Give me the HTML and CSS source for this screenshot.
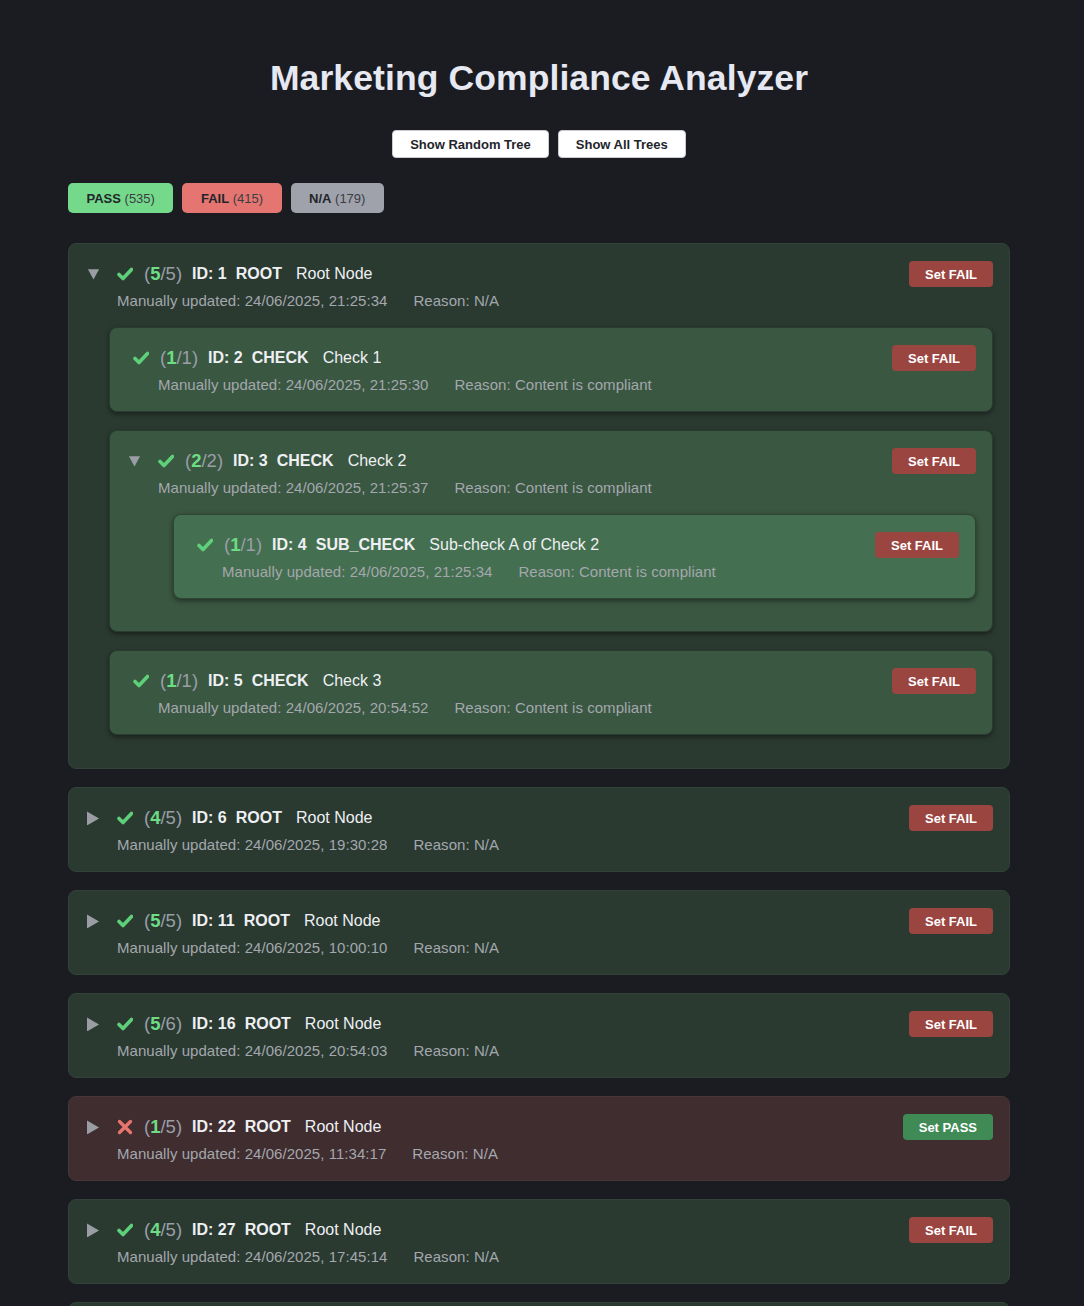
FILE: index.html
```html
<!DOCTYPE html>
<html lang="en">
<head>
<meta charset="utf-8">
<title>Marketing Compliance Analyzer</title>
<link rel="stylesheet" href="styles.css">
</head>
<body>
<div class="app">
  <h1 class="title">Marketing Compliance Analyzer</h1>
  <div class="actions">
    <button class="btn">Show Random Tree</button>
    <button class="btn">Show All Trees</button>
  </div>
  <div class="filters">
    <span class="chip chip-pass"><b>PASS</b> (535)</span>
    <span class="chip chip-fail"><b>FAIL</b> (415)</span>
    <span class="chip chip-na"><b>N/A</b> (179)</span>
  </div>

  <div class="trees">
    <!-- Tree 1 expanded -->
    <div class="node node-root pass">
      <div class="node-head">
        <span class="toggle"><svg viewBox="0 0 14 14" width="14" height="14"><polygon points="1,2 13,2 7,13" /></svg></span>
        <svg class="status-icon ok" viewBox="0 0 16 16" width="16" height="16"><path d="M2 8.5 L6 12.5 L14.5 3.5" /></svg>
        <span class="score">(<span class="num">5</span>/5)</span>
        <span class="node-id">ID: 1</span>
        <span class="node-type">ROOT</span>
        <span class="node-name">Root Node</span>
        <button class="set-btn set-fail">Set FAIL</button>
      </div>
      <div class="node-meta"><span>Manually updated: 24/06/2025, 21:25:34</span><span>Reason: N/A</span></div>
      <div class="children lvl1">
        <div class="node node-child">
          <div class="node-head">
            <span class="leaf-pad"></span>
            <svg class="status-icon ok" viewBox="0 0 16 16" width="16" height="16"><path d="M2 8.5 L6 12.5 L14.5 3.5" /></svg>
            <span class="score">(<span class="num">1</span>/1)</span>
            <span class="node-id">ID: 2</span>
            <span class="node-type">CHECK</span>
            <span class="node-name">Check 1</span>
            <button class="set-btn set-fail">Set FAIL</button>
          </div>
          <div class="node-meta"><span>Manually updated: 24/06/2025, 21:25:30</span><span>Reason: Content is compliant</span></div>
        </div>

        <div class="node node-child">
          <div class="node-head">
            <span class="toggle"><svg viewBox="0 0 14 14" width="14" height="14"><polygon points="1,2 13,2 7,13" /></svg></span>
            <svg class="status-icon ok" viewBox="0 0 16 16" width="16" height="16"><path d="M2 8.5 L6 12.5 L14.5 3.5" /></svg>
            <span class="score">(<span class="num">2</span>/2)</span>
            <span class="node-id">ID: 3</span>
            <span class="node-type">CHECK</span>
            <span class="node-name">Check 2</span>
            <button class="set-btn set-fail">Set FAIL</button>
          </div>
          <div class="node-meta"><span>Manually updated: 24/06/2025, 21:25:37</span><span>Reason: Content is compliant</span></div>
          <div class="children lvl2">
            <div class="node node-sub">
              <div class="node-head">
                <span class="leaf-pad"></span>
                <svg class="status-icon ok" viewBox="0 0 16 16" width="16" height="16"><path d="M2 8.5 L6 12.5 L14.5 3.5" /></svg>
                <span class="score">(<span class="num">1</span>/1)</span>
                <span class="node-id">ID: 4</span>
                <span class="node-type">SUB_CHECK</span>
                <span class="node-name">Sub-check A of Check 2</span>
                <button class="set-btn set-fail">Set FAIL</button>
              </div>
              <div class="node-meta"><span>Manually updated: 24/06/2025, 21:25:34</span><span>Reason: Content is compliant</span></div>
            </div>
          </div>
        </div>

        <div class="node node-child">
          <div class="node-head">
            <span class="leaf-pad"></span>
            <svg class="status-icon ok" viewBox="0 0 16 16" width="16" height="16"><path d="M2 8.5 L6 12.5 L14.5 3.5" /></svg>
            <span class="score">(<span class="num">1</span>/1)</span>
            <span class="node-id">ID: 5</span>
            <span class="node-type">CHECK</span>
            <span class="node-name">Check 3</span>
            <button class="set-btn set-fail">Set FAIL</button>
          </div>
          <div class="node-meta"><span>Manually updated: 24/06/2025, 20:54:52</span><span>Reason: Content is compliant</span></div>
        </div>
      </div>
    </div>

    <div class="node node-root pass">
      <div class="node-head">
        <span class="toggle"><svg viewBox="0 0 14 14" width="14" height="14"><polygon points="0,0 13,7.5 0,15" /></svg></span>
        <svg class="status-icon ok" viewBox="0 0 16 16" width="16" height="16"><path d="M2 8.5 L6 12.5 L14.5 3.5" /></svg>
        <span class="score">(<span class="num">4</span>/5)</span>
        <span class="node-id">ID: 6</span>
        <span class="node-type">ROOT</span>
        <span class="node-name">Root Node</span>
        <button class="set-btn set-fail">Set FAIL</button>
      </div>
      <div class="node-meta"><span>Manually updated: 24/06/2025, 19:30:28</span><span>Reason: N/A</span></div>
    </div>

    <div class="node node-root pass">
      <div class="node-head">
        <span class="toggle"><svg viewBox="0 0 14 14" width="14" height="14"><polygon points="0,0 13,7.5 0,15" /></svg></span>
        <svg class="status-icon ok" viewBox="0 0 16 16" width="16" height="16"><path d="M2 8.5 L6 12.5 L14.5 3.5" /></svg>
        <span class="score">(<span class="num">5</span>/5)</span>
        <span class="node-id">ID: 11</span>
        <span class="node-type">ROOT</span>
        <span class="node-name">Root Node</span>
        <button class="set-btn set-fail">Set FAIL</button>
      </div>
      <div class="node-meta"><span>Manually updated: 24/06/2025, 10:00:10</span><span>Reason: N/A</span></div>
    </div>

    <div class="node node-root pass">
      <div class="node-head">
        <span class="toggle"><svg viewBox="0 0 14 14" width="14" height="14"><polygon points="0,0 13,7.5 0,15" /></svg></span>
        <svg class="status-icon ok" viewBox="0 0 16 16" width="16" height="16"><path d="M2 8.5 L6 12.5 L14.5 3.5" /></svg>
        <span class="score">(<span class="num">5</span>/6)</span>
        <span class="node-id">ID: 16</span>
        <span class="node-type">ROOT</span>
        <span class="node-name">Root Node</span>
        <button class="set-btn set-fail">Set FAIL</button>
      </div>
      <div class="node-meta"><span>Manually updated: 24/06/2025, 20:54:03</span><span>Reason: N/A</span></div>
    </div>

    <div class="node node-root fail">
      <div class="node-head">
        <span class="toggle"><svg viewBox="0 0 14 14" width="14" height="14"><polygon points="0,0 13,7.5 0,15" /></svg></span>
        <svg class="status-icon bad" viewBox="0 0 16 16" width="16" height="16"><path d="M2.5 2.5 L13.5 13.5 M13.5 2.5 L2.5 13.5" /></svg>
        <span class="score">(<span class="num">1</span>/5)</span>
        <span class="node-id">ID: 22</span>
        <span class="node-type">ROOT</span>
        <span class="node-name">Root Node</span>
        <button class="set-btn set-pass">Set PASS</button>
      </div>
      <div class="node-meta"><span>Manually updated: 24/06/2025, 11:34:17</span><span>Reason: N/A</span></div>
    </div>

    <div class="node node-root pass">
      <div class="node-head">
        <span class="toggle"><svg viewBox="0 0 14 14" width="14" height="14"><polygon points="0,0 13,7.5 0,15" /></svg></span>
        <svg class="status-icon ok" viewBox="0 0 16 16" width="16" height="16"><path d="M2 8.5 L6 12.5 L14.5 3.5" /></svg>
        <span class="score">(<span class="num">4</span>/5)</span>
        <span class="node-id">ID: 27</span>
        <span class="node-type">ROOT</span>
        <span class="node-name">Root Node</span>
        <button class="set-btn set-fail">Set FAIL</button>
      </div>
      <div class="node-meta"><span>Manually updated: 24/06/2025, 17:45:14</span><span>Reason: N/A</span></div>
    </div>

    <div class="node node-root pass">
      <div class="node-head">
        <span class="toggle"><svg viewBox="0 0 14 14" width="14" height="14"><polygon points="0,0 13,7.5 0,15" /></svg></span>
        <svg class="status-icon ok" viewBox="0 0 16 16" width="16" height="16"><path d="M2 8.5 L6 12.5 L14.5 3.5" /></svg>
        <span class="score">(<span class="num">5</span>/5)</span>
        <span class="node-id">ID: 32</span>
        <span class="node-type">ROOT</span>
        <span class="node-name">Root Node</span>
        <button class="set-btn set-fail">Set FAIL</button>
      </div>
      <div class="node-meta"><span>Manually updated: 24/06/2025, 15:12:48</span><span>Reason: N/A</span></div>
    </div>
  </div>
</div>
</body>
</html>
```
FILE: styles.css
```css
* { box-sizing: border-box; }

html, body {
  margin: 0;
  padding: 0;
  background: #1b1c21;
}

body {
  font-family: "Liberation Sans", Arial, Helvetica, sans-serif;
  color: #e8eaee;
}

.app {
  width: 942px;
  margin-left: 68px;
  padding-top: 58px;
  padding-bottom: 40px;
}

.title {
  margin: 0;
  font-size: 35.5px;
  line-height: 40px;
  font-weight: 700;
  text-align: center;
  color: #e6e8f2;
  letter-spacing: 0.1px;
}

.actions {
  margin-top: 32px;
  display: flex;
  justify-content: center;
  gap: 9px;
}

.btn {
  height: 28px;
  padding: 0 17px;
  background: #ffffff;
  color: #23252b;
  border: 1px solid #c9cbd1;
  border-radius: 4px;
  font-family: inherit;
  font-size: 13px;
  font-weight: 700;
}

.filters {
  margin-top: 25px;
  display: flex;
  gap: 9px;
}

.chip {
  height: 30px;
  display: inline-flex;
  align-items: center;
  padding: 0 18.5px;
  border-radius: 5px;
  font-size: 13px;
  color: #3a3d44;
  white-space: pre;
}
.chip b { color: #22252a; }
.chip-pass { background: #74d98a; }
.chip-fail { background: #e57570; }
.chip-na { background: #a0a2ab; }

.trees {
  margin-top: 30px;
  display: flex;
  flex-direction: column;
  gap: 18px;
}

.node {
  border-radius: 8px;
  padding: 17px 16px 17px 18px;
}

.node-root {
  background: #2a3a31;
  border: 1px solid #314238;
}
.node-root.fail {
  background: #3f2d2f;
  border-color: #473538;
}

.node-child {
  background: #3a5742;
  border: 1px solid #2a3c2f;
  box-shadow: 0 2px 5px rgba(0, 0, 0, 0.45);
}

.node-sub {
  background: #446f50;
  border: 1px solid #2d4532;
  box-shadow: 0 2px 5px rgba(0, 0, 0, 0.45);
}

.node-head {
  display: flex;
  align-items: center;
  height: 26px;
  white-space: nowrap;
}

.toggle {
  width: 13px;
  height: 14px;
  margin-right: 17px;
  display: inline-flex;
  align-items: center;
}
.toggle svg { display: block; fill: #9b9da5; }

.leaf-pad {
  width: 5px;
}

.status-icon {
  flex: none;
  margin-right: 11px;
  fill: none;
  stroke-width: 3.6;
  stroke-linecap: round;
  stroke-linejoin: round;
}
.status-icon.ok { stroke: #5fd07a; }
.status-icon.bad { stroke: #e8756d; stroke-width: 3.4; }

.score {
  font-size: 18.5px;
  color: #9a9ea6;
  margin-right: 10px;
}
.score .num {
  color: #6ddc85;
  font-weight: 700;
}

.node-id {
  font-size: 16px;
  font-weight: 700;
  color: #eef0f3;
  margin-right: 9px;
}

.node-type {
  font-size: 16px;
  font-weight: 700;
  color: #eef0f3;
  margin-right: 14px;
}

.node-name {
  font-size: 16px;
  color: #eef0f3;
}

.set-btn {
  margin-left: auto;
  height: 26px;
  padding: 0 16px;
  border: none;
  border-radius: 4px;
  color: #ffffff;
  font-family: inherit;
  font-size: 13px;
  font-weight: 700;
}
.set-fail { background: #9b4541; }
.set-pass { background: #3f8a55; }

.node-meta {
  margin-top: 5px;
  padding-left: 30px;
  font-size: 15px;
  line-height: 18px;
  color: #a4a7ad;
  display: flex;
  gap: 26px;
  letter-spacing: 0.05px;
}

.children {
  margin-top: 17px;
  margin-bottom: 16px;
  display: flex;
  flex-direction: column;
  gap: 18px;
}
.children.lvl1 { margin-left: 22px; }
.children.lvl2 { margin-left: 45px; margin-bottom: 15px; }
```
